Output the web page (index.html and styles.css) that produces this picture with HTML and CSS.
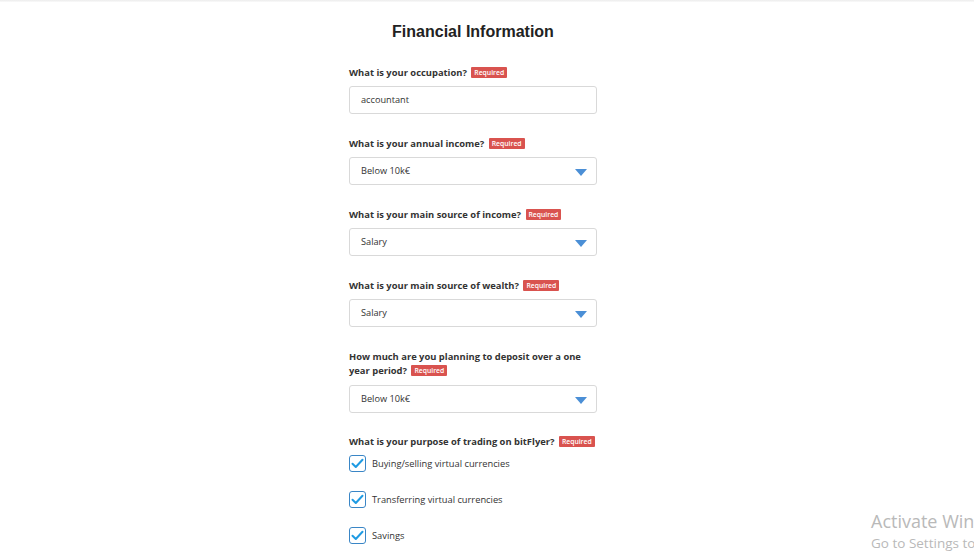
FILE: index.html
```html
<!DOCTYPE html>
<html>
<head>
<meta charset="utf-8">
<link rel="stylesheet" href="styles.css">
</head>
<body>
<div class="topline"></div>
<main class="form">
  <h1 class="title">Financial Information</h1>

  <div class="field">
    <div class="label">What is your occupation? <span class="badge">Required</span></div>
    <div class="control">accountant</div>
  </div>

  <div class="field">
    <div class="label">What is your annual income? <span class="badge">Required</span></div>
    <div class="control select">Below 10k€<span class="arrow"></span></div>
  </div>

  <div class="field">
    <div class="label">What is your main source of income? <span class="badge">Required</span></div>
    <div class="control select">Salary<span class="arrow"></span></div>
  </div>

  <div class="field">
    <div class="label">What is your main source of wealth? <span class="badge">Required</span></div>
    <div class="control select">Salary<span class="arrow"></span></div>
  </div>

  <div class="field two">
    <div class="label">How much are you planning to deposit over a one year period? <span class="badge">Required</span></div>
    <div class="control select">Below 10k€<span class="arrow"></span></div>
  </div>

  <div class="field last">
    <div class="label">What is your purpose of trading on bitFlyer? <span class="badge">Required</span></div>
    <div class="checks">
      <div class="check"><span class="box"><svg width="13" height="11" viewBox="0 0 13 11"><path d="M1.5 5.8 L4.8 9 L11.5 1.8" fill="none" stroke="#1f9be3" stroke-width="2" stroke-linecap="round" stroke-linejoin="round"/></svg></span>Buying/selling virtual currencies</div>
      <div class="check"><span class="box"><svg width="13" height="11" viewBox="0 0 13 11"><path d="M1.5 5.8 L4.8 9 L11.5 1.8" fill="none" stroke="#1f9be3" stroke-width="2" stroke-linecap="round" stroke-linejoin="round"/></svg></span>Transferring virtual currencies</div>
      <div class="check"><span class="box"><svg width="13" height="11" viewBox="0 0 13 11"><path d="M1.5 5.8 L4.8 9 L11.5 1.8" fill="none" stroke="#1f9be3" stroke-width="2" stroke-linecap="round" stroke-linejoin="round"/></svg></span>Savings</div>
    </div>
  </div>
</main>
<div class="watermark">
  <div class="wm1">Activate Windows</div>
  <div class="wm2">Go to Settings to activate Windows.</div>
</div>
</body>
</html>
```

FILE: styles.css
```css
html, body {
  margin: 0;
  padding: 0;
  background: #ffffff;
  overflow: hidden;
}
body {
  width: 974px;
  height: 560px;
  position: relative;
  font-family: "Open Sans", "Liberation Sans", sans-serif;
  color: #333;
}
.topline {
  height: 2px;
  background: linear-gradient(#ececec, #fafafa);
}
.form {
  width: 248px;
  margin-left: 349px;
  display: flex;
  flex-direction: column;
}
.title {
  margin: 0;
  padding-top: 19px;
  height: 22px;
  line-height: 22px;
  font-family: "Liberation Sans", Arial, sans-serif;
  font-weight: bold;
  font-size: 16px;
  color: #222;
  text-align: center;
  margin-bottom: 23px;
}
.field {
  display: flex;
  flex-direction: column;
  gap: 6px;
  margin-bottom: 23px;
}
.two {
  gap: 7px;
  margin-bottom: 22px;
}
.label {
  font-weight: 700;
  font-size: 9.4px;
  line-height: 14px;
  color: #333;
}
.badge {
  display: inline-block;
  background: #d9534f;
  color: #fff;
  font-size: 6.8px;
  font-weight: 600;
  line-height: 11px;
  height: 11px;
  padding: 0 3px;
  border-radius: 1px;
  margin-left: 2px;
  vertical-align: 1px;
}
.control {
  box-sizing: border-box;
  height: 28px;
  border: 1px solid #d9d9d9;
  border-radius: 3px;
  padding: 0 11px;
  font-size: 9.2px;
  line-height: 26px;
  color: #333;
  display: flex;
  align-items: center;
  justify-content: space-between;
}
.arrow {
  width: 0;
  height: 0;
  border-left: 6px solid transparent;
  border-right: 6px solid transparent;
  border-top: 7px solid #4b8fd6;
  margin-right: -2px;
  margin-top: 2px;
}
.last {
  gap: 6px;
}
.checks {
  display: flex;
  flex-direction: column;
  gap: 19px;
}
.check {
  display: flex;
  align-items: center;
  gap: 6px;
  font-size: 9.3px;
  line-height: 17px;
  color: #333;
}
.box {
  box-sizing: border-box;
  width: 17px;
  height: 17px;
  border: 1.5px solid #3a86c6;
  border-radius: 3px;
  display: flex;
  align-items: center;
  justify-content: center;
  background: #fff;
}
.watermark {
  position: absolute;
  left: 871px;
  top: 509px;
  font-family: "Open Sans", "Liberation Sans", sans-serif;
  color: #b9b9b9;
  white-space: nowrap;
}
.wm1 {
  font-size: 18px;
  line-height: 24px;
}
.wm2 {
  font-size: 13.5px;
  line-height: 20px;
}
```
